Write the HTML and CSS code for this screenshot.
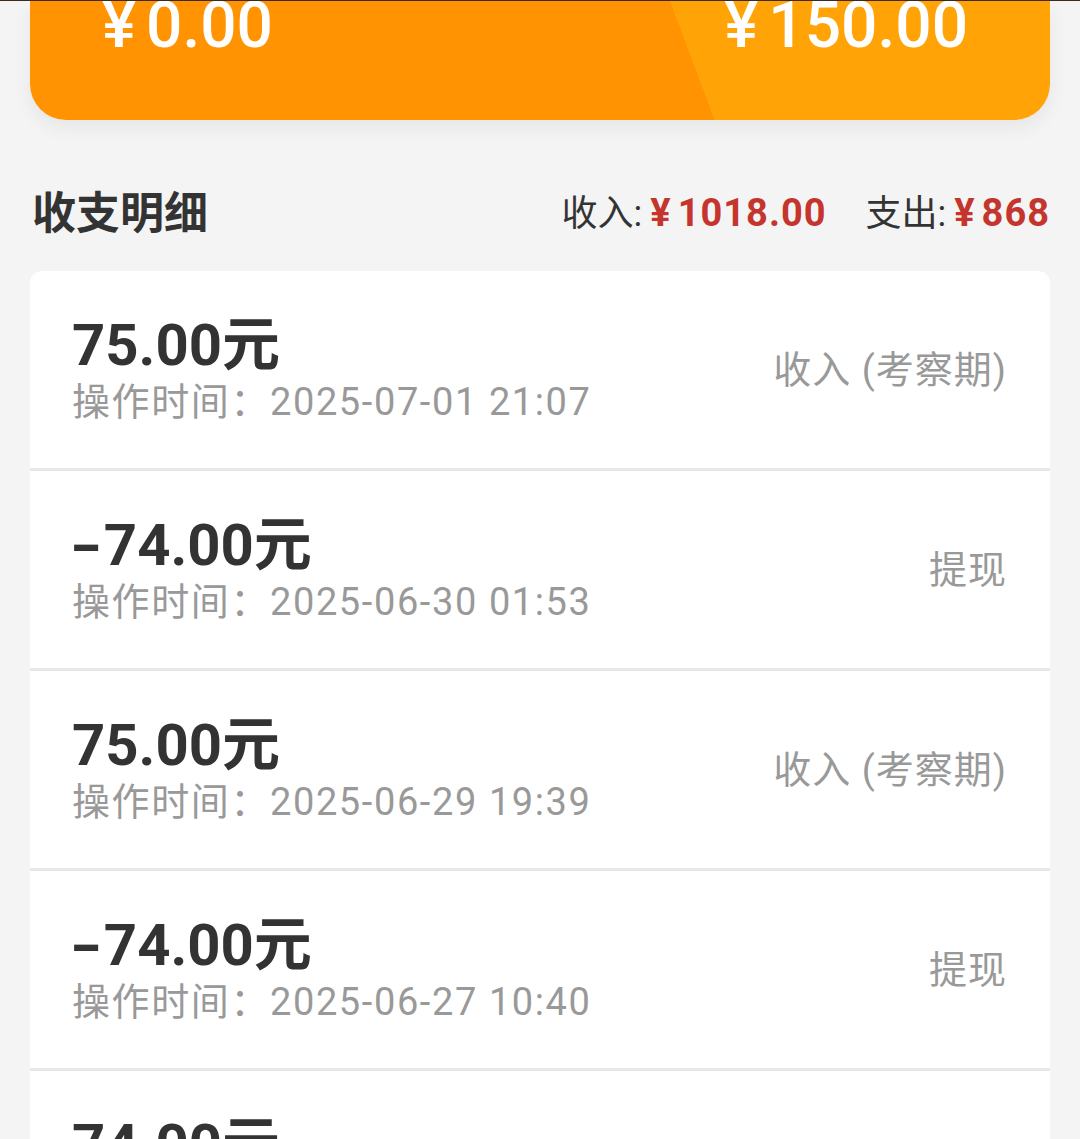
FILE: index.html
```html
<!DOCTYPE html>
<html lang="zh-CN">
<head>
    <meta charset="UTF-8">
    <meta name="viewport" content="width=device-width, initial-scale=1.0">
    <title>收支明细</title>
    <link rel="stylesheet" href="styles.css">
</head>
<body>
<div class="balance-card">
    <div class="balance-row">
        <span class="balance"><span class="yen">¥</span>0.00</span>
        <span class="balance"><span class="yen">¥</span>150.00</span>
    </div>
</div>

<div class="section-head">
    <h2 class="section-title">收支明细</h2>
    <div class="totals">
        <span class="total-label">收入:</span><span class="total-value"><span class="yen-sm">¥</span>1018.00</span>
        <span class="total-label total-gap">支出:</span><span class="total-value"><span class="yen-sm">¥</span>868</span>
    </div>
</div>

<div class="record-list">
    <div class="record">
        <div class="record-main">
            <div class="amount">75.00元</div>
            <div class="time">操作时间：2025-07-01 21:07</div>
        </div>
        <div class="record-type">收入 (考察期)</div>
    </div>
    <div class="record">
        <div class="record-main">
            <div class="amount"><span class="sign">-</span>74.00元</div>
            <div class="time">操作时间：2025-06-30 01:53</div>
        </div>
        <div class="record-type">提现</div>
    </div>
    <div class="record">
        <div class="record-main">
            <div class="amount">75.00元</div>
            <div class="time">操作时间：2025-06-29 19:39</div>
        </div>
        <div class="record-type">收入 (考察期)</div>
    </div>
    <div class="record">
        <div class="record-main">
            <div class="amount"><span class="sign">-</span>74.00元</div>
            <div class="time">操作时间：2025-06-27 10:40</div>
        </div>
        <div class="record-type">提现</div>
    </div>
    <div class="record">
        <div class="record-main">
            <div class="amount">74.00元</div>
            <div class="time">操作时间：2025-06-26 09:12</div>
        </div>
        <div class="record-type">收入 (考察期)</div>
    </div>
</div>
</body>
</html>
```

FILE: styles.css
```css
body {
    margin: 0;
    background-color: #f4f4f4;
    border-top: 1px solid #3d2b1a;
    font-family: Roboto, "Noto Sans CJK SC", sans-serif;
    color: #333;
    overflow: hidden;
}
.balance-card {
    height: 119px;
    margin: 0 30px;
    border-radius: 0 0 36px 36px;
    background: linear-gradient(69.44deg, #ff9301 641px, #ffa307 641px);
    box-shadow: 0 8px 20px rgba(0, 0, 0, 0.06);
    overflow: hidden;
}
.balance-row {
    display: flex;
    justify-content: space-between;
    margin-top: -7px;
    padding: 0 82px 0 72px;
}
.balance {
    font-size: 64px;
    line-height: 64px;
    font-weight: 500;
    color: #fff;
}
.yen {
    margin-right: 10px;
}
.section-head {
    display: flex;
    justify-content: space-between;
    align-items: center;
    height: 60px;
    margin: 60px 30px 31px 32px;
}
.section-title {
    margin: 0;
    font-size: 44px;
    font-weight: bold;
    color: #333;
}
.totals {
    font-size: 36px;
}
.total-label {
    color: #333;
}
.total-gap {
    margin-left: 30px;
}
.total-value {
    font-size: 38px;
    font-weight: bold;
    letter-spacing: 1px;
    color: #c4362d;
    margin-left: 8px;
}
.yen-sm {
    margin-right: 6px;
}
.record-list {
    margin: 0 30px;
    background-color: #fff;
    border-radius: 12px 12px 0 0;
}
.record {
    display: flex;
    justify-content: space-between;
    align-items: center;
    height: 197px;
    padding: 0 44px 0 42px;
    border-bottom: 3px solid #e8e8e8;
}
.amount {
    font-size: 58px;
    line-height: 60px;
    font-weight: bold;
    color: #333;
}
.sign {
    display: inline-block;
    margin: 0 6px 0 3px;
    transform: scaleX(1.5);
}
.time {
    margin-top: 5px;
    font-size: 38px;
    line-height: 44px;
    letter-spacing: 1.6px;
    color: #999;
}
.record-type {
    font-size: 38px;
    line-height: 44px;
    letter-spacing: 1px;
    margin-right: -1px;
    color: #999;
}
```
